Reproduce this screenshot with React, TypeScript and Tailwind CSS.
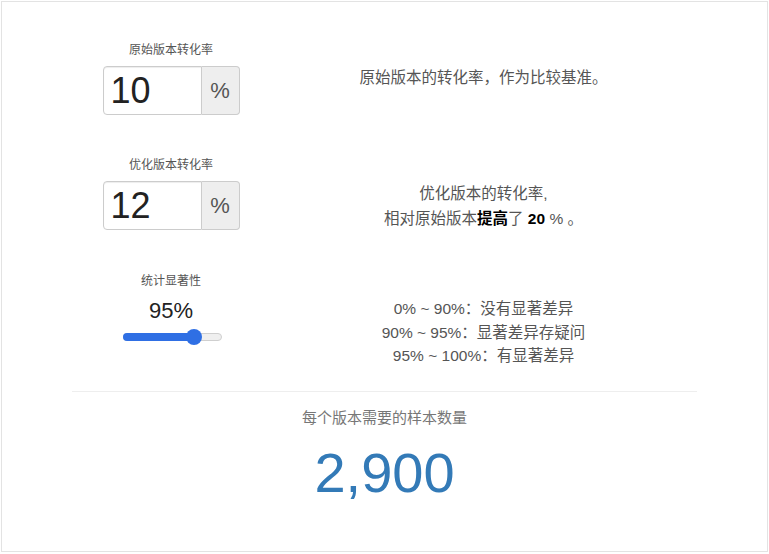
import React from "react";

const font = { fontFamily: '"Liberation Sans", "Noto Sans CJK SC", sans-serif' };

function PercentInput({ value }: { value: string }) {
  return (
    <div className="flex h-[49px] w-[137px]">
      <div className="flex w-[99px] items-center rounded-l-[4px] border border-[#cccccc] bg-white pl-[7px] text-[36px] text-[#222] shadow-[inset_0_1px_1px_rgba(0,0,0,0.075)]">
        {value}
      </div>
      <div className="flex w-[38px] items-center justify-center rounded-r-[4px] border border-l-0 border-[#cccccc] bg-[#eeeeee] text-[22px] text-[#555]">
        %
      </div>
    </div>
  );
}

function Label({ children }: { children: React.ReactNode }) {
  return <div className="h-[16px] text-[12px] leading-[16px] text-[#555]">{children}</div>;
}

export default function App() {
  return (
    <div style={font} className="h-[554px] w-[769px] bg-white p-px">
      <div className="flex h-[551px] flex-col border border-[#e3e3e3] px-[70px] pt-[40px]">
        {/* input rows */}
        <div className="grid grid-cols-[198px_1fr] gap-y-[42px]">
          <div className="flex flex-col items-center gap-[8px]">
            <Label>原始版本转化率</Label>
            <PercentInput value="10" />
          </div>
          <div className="pt-[24px] text-center text-[15.5px] leading-[24px] text-[#555]">
            原始版本的转化率，作为比较基准。
          </div>

          <div className="flex flex-col items-center gap-[8px]">
            <Label>优化版本转化率</Label>
            <PercentInput value="12" />
          </div>
          <div className="pt-[24px] text-center text-[15.5px] leading-[25px] text-[#555]">
            <div>优化版本的转化率,</div>
            <div>
              相对原始版本<b className="text-black">提高</b>了 <b className="text-black">20</b> % 。
            </div>
          </div>

          <div className="flex flex-col items-center">
            <Label>统计显著性</Label>
            <div className="mt-[9px] text-[22px] leading-[26px] text-[#222]">95%</div>
            <div className="relative mt-[6px] ml-[2px] h-[14px] w-[99px]">
              <div className="absolute top-[3px] h-[8px] w-full rounded-full border border-[#cfcfcf] bg-[#efefef]" />
              <div className="absolute top-[3px] h-[8px] w-[72px] rounded-full bg-[#2f6fe4]" />
              <div className="absolute left-[63px] top-[-1px] h-[16px] w-[16px] rounded-full bg-[#2f6fe4]" />
            </div>
          </div>
          <div className="pt-[24px] text-center text-[15.5px] leading-[23.5px] text-[#555]">
            <div>0% ~ 90%：没有显著差异</div>
            <div>90% ~ 95%：显著差异存疑问</div>
            <div>95% ~ 100%：有显著差异</div>
          </div>
        </div>

        {/* result */}
        <div className="mt-[23px] border-t border-[#eeeeee] pt-[16px] text-center">
          <div className="text-[15px] leading-[20px] text-[#777]">每个版本需要的样本数量</div>
          <div className="mt-[13px] text-[56px] leading-[64px] text-[#337ab7]">2,900</div>
        </div>
      </div>
    </div>
  );
}
